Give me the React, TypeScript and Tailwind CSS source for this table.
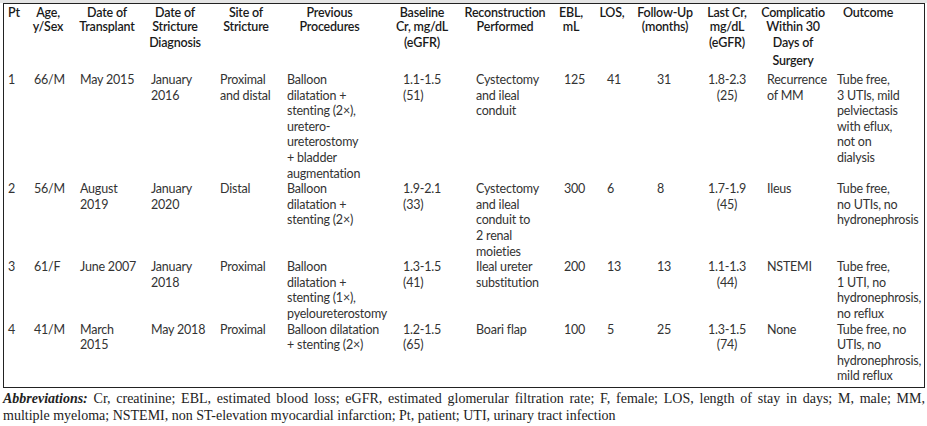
type Col = {
  w: string;
  head: string[];
  extra?: string[];
  headCls: string;
  bodyCls: string;
};

// column boxes are sized so header centres and body left edges land where the
// print layout has them; the widths add up to the 920px inside the frame.
const cols: Col[] = [
  { w: "w-[24px]", head: ["Pt"], headCls: "pl-1 text-left", bodyCls: "pl-1" },
  { w: "w-[46px]", head: ["Age,", "y/Sex"], headCls: "pr-[6px] text-center", bodyCls: "pl-[6px]" },
  { w: "w-[71px]", head: ["Date of", "Transplant"], headCls: "pr-[5px] text-center", bodyCls: "pl-[6px]" },
  { w: "w-[69px]", head: ["Date of", "Stricture"], extra: ["Diagnosis"], headCls: "pr-[9px] text-center", bodyCls: "pl-[6px]" },
  { w: "w-[68px]", head: ["Site of", "Stricture"], headCls: "pr-1 text-center", bodyCls: "pl-[6px]" },
  { w: "w-[112px]", head: ["Previous", "Procedures"], headCls: "pr-[17px] text-center", bodyCls: "pl-[5px]" },
  { w: "w-[68px]", head: ["Baseline", "Cr, mg/dL"], extra: ["(eGFR)"], headCls: "pr-3 text-center", bodyCls: "pl-[9px]" },
  { w: "w-[94px]", head: ["Reconstruction", "Performed"], headCls: "pr-2 text-center", bodyCls: "pl-[14px]" },
  { w: "w-[42px]", head: ["EBL,", "mL"], headCls: "pr-3 text-center", bodyCls: "pl-2" },
  { w: "w-[36px]", head: ["LOS,"], headCls: "pr-2 text-center", bodyCls: "pl-[9px]" },
  { w: "w-[68px]", head: ["Follow-Up", "(months)"], headCls: "pr-[6px] text-center", bodyCls: "pl-[23px]" },
  { w: "w-[54px]", head: ["Last Cr,", "mg/dL"], extra: ["(eGFR)"], headCls: "pr-1 text-center", bodyCls: "pr-1 text-center" },
  { w: "w-[76px]", head: ["Complicatio", "Within 30"], extra: ["Days of", "Surgery"], headCls: "pr-[2px] text-center", bodyCls: "pl-[11px]" },
  { w: "w-[92px]", head: ["Outcome"], headCls: "pr-5 text-center", bodyCls: "pl-[5px]" },
];

const rows: string[][][] = [
  [
    ["1"], ["66/M"], ["May 2015"], ["January", "2016"], ["Proximal", "and distal"],
    ["Balloon", "dilatation +", "stenting (2×),", "uretero-", "ureterostomy", "+ bladder", "augmentation"],
    ["1.1-1.5", "(51)"], ["Cystectomy", "and ileal", "conduit"], ["125"], ["41"], ["31"],
    ["1.8-2.3", "(25)"], ["Recurrence", "of MM"],
    ["Tube free,", "3 UTIs, mild", "pelviectasis", "with eflux,", "not on", "dialysis"],
  ],
  [
    ["2"], ["56/M"], ["August", "2019"], ["January", "2020"], ["Distal"],
    ["Balloon", "dilatation +", "stenting (2×)"],
    ["1.9-2.1", "(33)"], ["Cystectomy", "and ileal", "conduit to", "2 renal", "moieties"],
    ["300"], ["6"], ["8"], ["1.7-1.9", "(45)"], ["Ileus"],
    ["Tube free,", "no UTIs, no", "hydronephrosis"],
  ],
  [
    ["3"], ["61/F"], ["June 2007"], ["January", "2018"], ["Proximal"],
    ["Balloon", "dilatation +", "stenting (1×),", "pyeloureterostomy"],
    ["1.3-1.5", "(41)"], ["Ileal ureter", "substitution"], ["200"], ["13"], ["13"],
    ["1.1-1.3", "(44)"], ["NSTEMI"],
    ["Tube free,", "1 UTI, no", "hydronephrosis,", "no reflux"],
  ],
  [
    ["4"], ["41/M"], ["March", "2015"], ["May 2018"], ["Proximal"],
    ["Balloon dilatation", "+ stenting (2×)"],
    ["1.2-1.5", "(65)"], ["Boari flap"], ["100"], ["5"], ["25"],
    ["1.3-1.5", "(74)"], ["None"],
    ["Tube free, no", "UTIs, no", "hydronephrosis,", "mild reflux"],
  ],
];

function HeaderRow() {
  return (
    <div className="flex h-[68px] text-[12.5px] font-semibold tracking-[-0.2px] text-[#1a1a1a]">
      {cols.map((c, i) => (
        <div key={i} className={`${c.w} shrink-0 whitespace-nowrap pt-[2px] ${c.headCls}`}>
          <div className="leading-[14px]">
            {c.head.map((l, j) => (
              <div key={j}>{l}</div>
            ))}
          </div>
          {c.extra && (
            <div className="leading-[18px]">
              {c.extra.map((l, j) => (
                <div key={j}>{l}</div>
              ))}
            </div>
          )}
        </div>
      ))}
    </div>
  );
}

function BodyRow({ cells }: { cells: string[][] }) {
  return (
    <div className="flex text-[12.5px] leading-[15.6px] tracking-[-0.2px] text-[#333]">
      {cells.map((lines, i) => (
        <div key={i} className={`${cols[i].w} shrink-0 whitespace-nowrap ${cols[i].bodyCls}`}>
          {lines.map((l, j) => (
            <div key={j}>{l}</div>
          ))}
        </div>
      ))}
    </div>
  );
}

export default function App() {
  return (
    <div className="h-[426px] w-[927px] overflow-hidden bg-white">
      <div className="h-[3px] bg-[#e4e4e4]" />
      <div className="ml-[3px] w-[922px] border border-[#222] pb-[3px] [font-family:Lato,sans-serif]">
        <HeaderRow />
        {rows.map((r, i) => (
          <BodyRow key={i} cells={r} />
        ))}
      </div>
      <div className="ml-[3px] mt-[2px] w-[922px] text-[14px] leading-[17px] text-[#222] [font-family:'Liberation_Serif',serif]">
        <div className="text-justify [text-align-last:justify]">
          <span className="font-bold italic">Abbreviations:</span> Cr, creatinine; EBL, estimated blood loss;
          eGFR, estimated glomerular filtration rate; F, female; LOS, length of stay in days; M, male; MM,
        </div>
        <div>
          multiple myeloma; NSTEMI, non ST-elevation myocardial infarction; Pt, patient; UTI, urinary tract
          infection
        </div>
      </div>
    </div>
  );
}
